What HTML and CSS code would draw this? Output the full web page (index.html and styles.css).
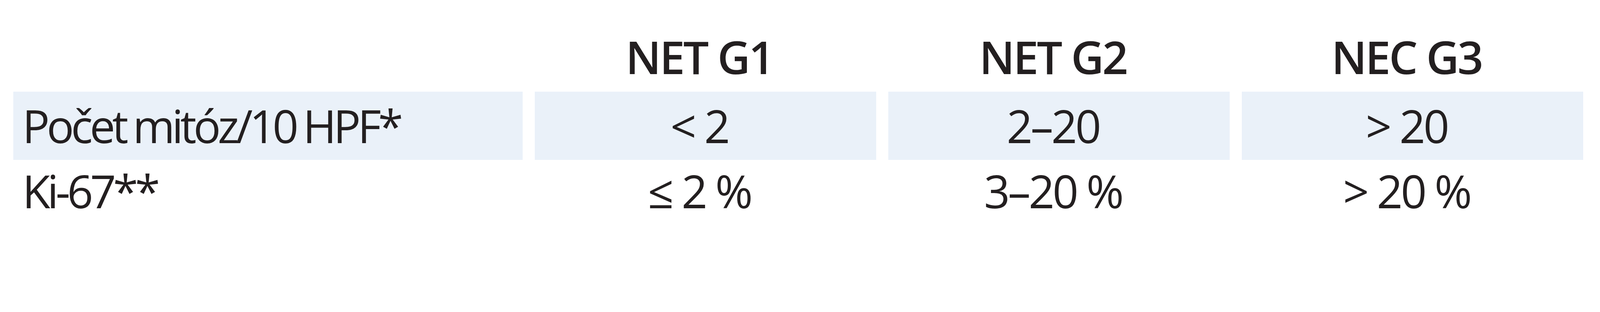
FILE: index.html
```html
<!DOCTYPE html>
<html lang="cs">
<head>
<meta charset="utf-8">
<title>Grading</title>
<link rel="stylesheet" href="styles.css">
</head>
<body>
<div class="grid">
  <div class="head"></div>
  <div class="head">NET G1</div>
  <div class="head">NET G2</div>
  <div class="head">NEC G3</div>

  <div class="cell band label">Počet mitóz/10 HPF*</div>
  <div class="cell band">&lt; 2</div>
  <div class="cell band">2–20</div>
  <div class="cell band">&gt; 20</div>

  <div class="cell plain label">Ki-67**</div>
  <div class="cell plain">≤ 2 %</div>
  <div class="cell plain">3–20 %</div>
  <div class="cell plain">&gt; 20 %</div>
</div>
</body>
</html>
```
FILE: styles.css
```css
:root {
  --u: calc(100vw / 4713);
}
html, body {
  margin: 0;
  background: #ffffff;
}
body {
  font-family: "Open Sans", "Liberation Sans", sans-serif;
  color: #231f20;
  overflow: hidden;
}
.grid {
  display: grid;
  grid-template-columns: calc(1500 * var(--u)) 1fr 1fr 1fr;
  grid-template-rows: calc(270 * var(--u)) calc(202 * var(--u)) calc(200 * var(--u));
  column-gap: calc(36 * var(--u));
  padding-left: calc(39 * var(--u));
  padding-right: calc(49 * var(--u));
}
.head {
  font-weight: 600;
  font-size: calc(134 * var(--u));
  line-height: calc(134 * var(--u));
  padding-top: calc(100 * var(--u));
  padding-right: calc(36 * var(--u));
  text-align: center;
  letter-spacing: calc(-5 * var(--u));
}
.cell {
  font-size: calc(134 * var(--u));
  line-height: calc(134 * var(--u));
  text-align: center;
  padding-right: calc(36 * var(--u));
  letter-spacing: calc(-6 * var(--u));
}
.band {
  background: #eaf1f9;
  padding-top: calc(34 * var(--u));
}
.plain {
  padding-top: calc(24 * var(--u));
}
.label {
  text-align: left;
  padding-left: calc(27 * var(--u));
  padding-right: 0;
  letter-spacing: calc(-9 * var(--u));
  word-spacing: calc(-4 * var(--u));
}
```
